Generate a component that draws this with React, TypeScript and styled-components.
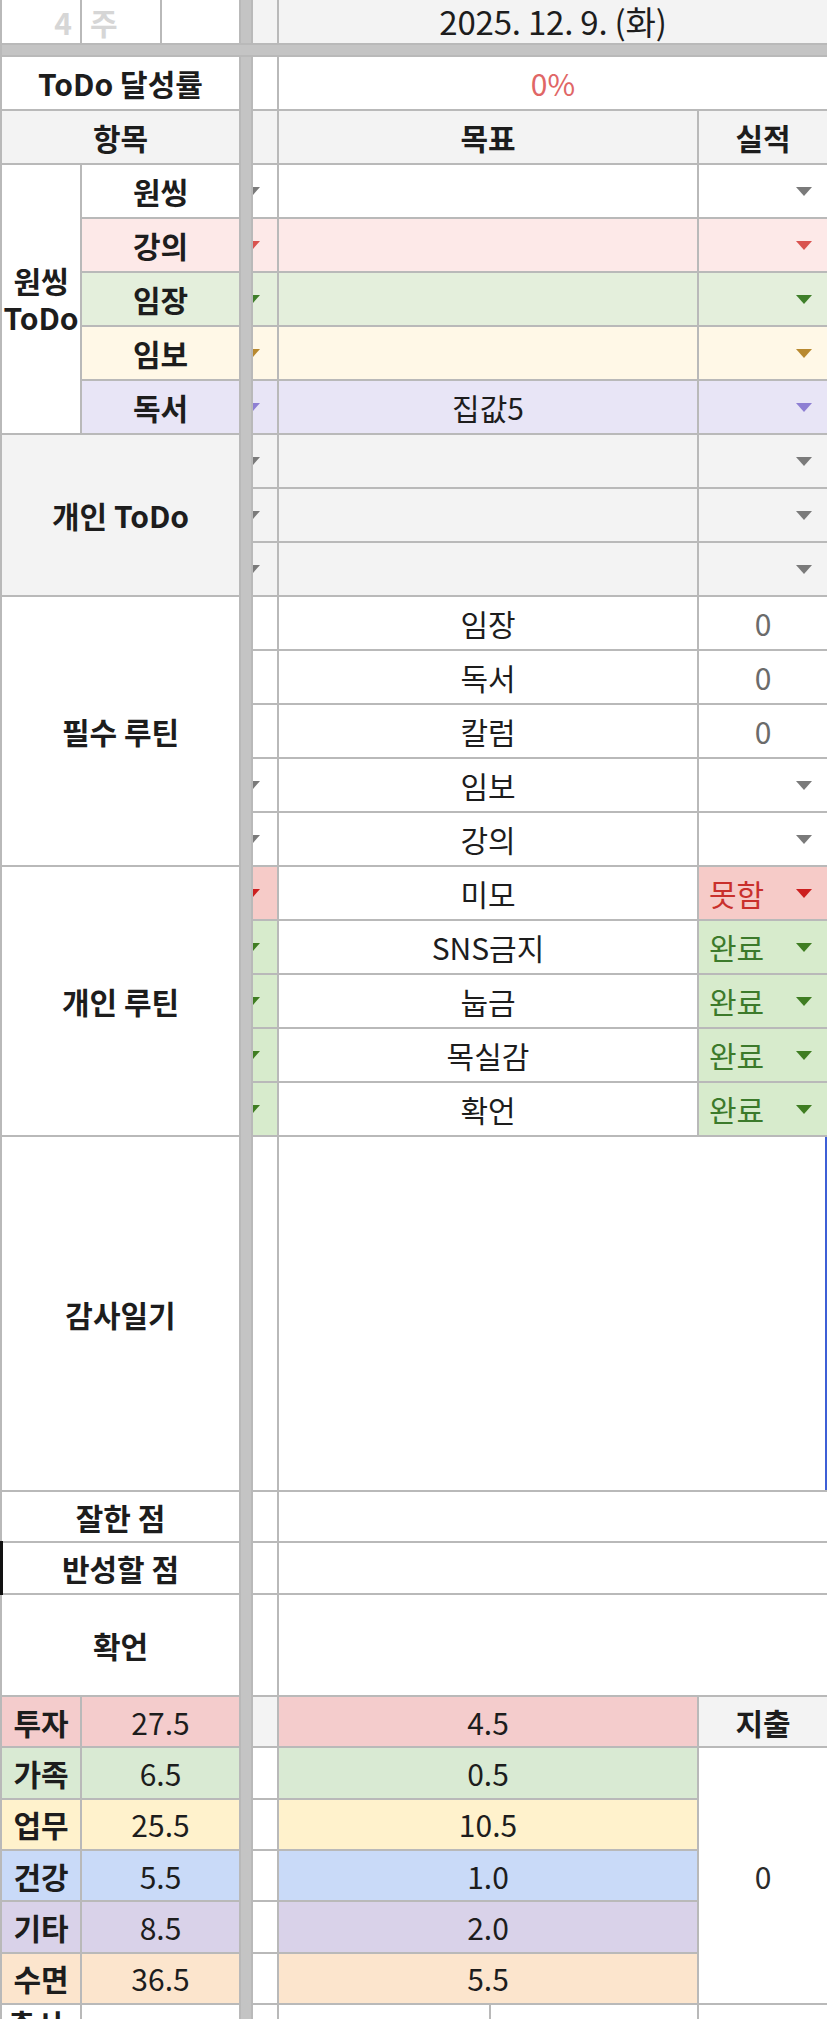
import React from 'react';
import styled, { createGlobalStyle } from 'styled-components';

const LINE = '#b9b9b9';
const BAND = '#c4c4c4';
const GRAY = '#f3f3f3';

const GlobalStyle = createGlobalStyle`
  html, body { margin: 0; padding: 0; background: #fff; overflow: hidden; }
  body { font-family: "Noto Sans CJK KR", "Noto Sans", sans-serif; }
`;

const Sheet = styled.div`
  display: grid;
  grid-template-columns: 78px 78px 77px 10px 24px 418px 128px;
  grid-template-rows: 43px 10px repeat(20, 52px) 353px repeat(10, 49.3px) 40px;
  gap: 2px;
  padding-left: 2px;
  background: ${LINE};
  width: 827px;
  height: 2019px;
  overflow: hidden;
  box-sizing: border-box;
  font-family: "Noto Sans CJK KR", sans-serif;
  font-size: 30px;
  color: #1d1d1d;
`;

const VBand = styled.div<{ $row: string }>`
  grid-column: 4;
  grid-row: ${(p) => p.$row};
  background: ${BAND};
`;

const HBand = styled.div`
  grid-column: 1 / -1;
  grid-row: 2;
  background: ${BAND};
`;

type CellProps = {
  $bg?: string;
  $cs?: number;
  $rs?: number;
  $justify?: 'flex-start' | 'center' | 'flex-end' | 'space-between';
  $color?: string;
};

const Cell = styled.div<CellProps>`
  grid-column: span ${(p) => p.$cs ?? 1};
  grid-row: span ${(p) => p.$rs ?? 1};
  background: ${(p) => p.$bg ?? '#fff'};
  color: ${(p) => p.$color ?? 'inherit'};
  display: flex;
  align-items: center;
  justify-content: ${(p) => p.$justify ?? 'center'};
  overflow: hidden;
  min-width: 0;
  white-space: nowrap;
  line-height: 1.2;
  position: relative;
`;

const Label = styled(Cell)`
  font-weight: 700;
`;

const GroupLabel = styled(Label)`
  flex-direction: column;
  line-height: 1.22;
  text-align: center;
  overflow: visible;
`;

const GroupLine = styled.span`
  display: block;
`;

const WeekText = styled(Cell)`
  font-weight: 700;
  color: #d6d6d6;
  padding: 0 8px;
`;

const DateCell = styled(Cell)`
  font-size: 33px;
  line-height: 1.1;
  letter-spacing: -0.2px;
  overflow: visible;
`;

const Value = styled(Cell)`
  font-weight: 400;
`;

const Dropdown = styled(Cell)`
  padding: 0 15px 0 10px;
`;

const SelectedNote = styled(Cell)`
  box-shadow: inset -2px 0 0 #3d5fd6;
`;

const MarkedLabel = styled(Label)`
  overflow: visible;
  &::before {
    content: '';
    position: absolute;
    left: -2px;
    top: -2px;
    bottom: -2px;
    width: 3px;
    background: #111;
  }
`;

const Arrow = styled.span<{ $color: string }>`
  flex: none;
  width: 0;
  height: 0;
  border-left: 8px solid transparent;
  border-right: 8px solid transparent;
  border-top: 9px solid ${(p) => p.$color};
`;

const ClippedArrow = styled(Arrow)`
  margin-left: -9px;
  align-self: center;
`;

const StatusText = styled.span<{ $color: string }>`
  color: ${(p) => p.$color};
  font-size: 30px;
`;

const SplitCell = styled(Cell)`
  display: grid;
  grid-template-columns: 210px 1fr;
  gap: 2px;
  background: ${LINE};
  align-items: stretch;
`;

const SplitPart = styled.div`
  background: #fff;
`;

const TailLabel = styled(Cell)`
  align-items: flex-start;
  justify-content: flex-start;
  padding-left: 6px;
  font-weight: 700;
`;

const oneThing = [
  { label: '원씽', bg: '#ffffff', arrow: '#7a7a7a', goal: '' },
  { label: '강의', bg: '#fde9e8', arrow: '#d9534f', goal: '' },
  { label: '임장', bg: '#e4efdc', arrow: '#3f7f2a', goal: '' },
  { label: '임보', bg: '#fff8e7', arrow: '#b8892f', goal: '' },
  { label: '독서', bg: '#e8e5f6', arrow: '#8e7fd3', goal: '집값5' },
];

const mustRoutines = [
  { goal: '임장', result: '0' },
  { goal: '독서', result: '0' },
  { goal: '칼럼', result: '0' },
  { goal: '임보', result: null },
  { goal: '강의', result: null },
];

const DONE = { bg: '#d7ebcc', text: '#3c7a2b', arrow: '#3f7d22', label: '완료' };
const FAIL = { bg: '#f6cbc8', text: '#c9302c', arrow: '#cc1f1f', label: '못함' };

const myRoutines = [
  { goal: '미모', status: FAIL },
  { goal: 'SNS금지', status: DONE },
  { goal: '눕금', status: DONE },
  { goal: '목실감', status: DONE },
  { goal: '확언', status: DONE },
];

const stats = [
  { label: '투자', total: '27.5', today: '4.5', bg: '#f4cccc' },
  { label: '가족', total: '6.5', today: '0.5', bg: '#d9ead3' },
  { label: '업무', total: '25.5', today: '10.5', bg: '#fff2cc' },
  { label: '건강', total: '5.5', today: '1.0', bg: '#c9daf8' },
  { label: '기타', total: '8.5', today: '2.0', bg: '#d9d2e9' },
  { label: '수면', total: '36.5', today: '5.5', bg: '#fce5cd' },
];

const GREY_ARROW = '#7a7a7a';

export default function App() {
  return (
    <>
      <GlobalStyle />
      <Sheet>
        <VBand $row="1" />
        <HBand />
        <VBand $row="3 / -1" />

        {/* header */}
        <WeekText $justify="flex-end">4</WeekText>
        <WeekText $justify="flex-start">주</WeekText>
        <Cell />
        <Cell $bg={GRAY} />
        <DateCell $cs={2} $bg={GRAY}>2025. 12. 9. (화)</DateCell>

        {/* ToDo rate */}
        <Label $cs={3}>ToDo 달성률</Label>
        <Cell />
        <Value $cs={2} $color="#e06666">0%</Value>

        {/* column header */}
        <Label $cs={3} $bg={GRAY}>항목</Label>
        <Cell $bg={GRAY} />
        <Label $bg={GRAY}>목표</Label>
        <Label $bg={GRAY}>실적</Label>

        {/* one thing todo */}
        {oneThing.map((r, i) => (
          <React.Fragment key={r.label}>
            {i === 0 && (
              <GroupLabel $rs={5}>
                <GroupLine>원씽</GroupLine>
                <GroupLine>ToDo</GroupLine>
              </GroupLabel>
            )}
            <Label $cs={2} $bg={r.bg}>{r.label}</Label>
            <Cell $bg={r.bg} $justify="flex-start">
              <ClippedArrow $color={r.arrow} />
            </Cell>
            <Value $bg={r.bg}>{r.goal}</Value>
            <Dropdown $bg={r.bg} $justify="flex-end">
              <Arrow $color={r.arrow} />
            </Dropdown>
          </React.Fragment>
        ))}

        {/* personal todo */}
        {[0, 1, 2].map((i) => (
          <React.Fragment key={`p${i}`}>
            {i === 0 && (
              <Label $cs={3} $rs={3} $bg={GRAY}>개인 ToDo</Label>
            )}
            <Cell $bg={GRAY} $justify="flex-start">
              <ClippedArrow $color={GREY_ARROW} />
            </Cell>
            <Cell $bg={GRAY} />
            <Dropdown $bg={GRAY} $justify="flex-end">
              <Arrow $color={GREY_ARROW} />
            </Dropdown>
          </React.Fragment>
        ))}

        {/* must routines */}
        {mustRoutines.map((r, i) => (
          <React.Fragment key={`m${i}`}>
            {i === 0 && <Label $cs={3} $rs={5}>필수 루틴</Label>}
            <Cell $justify="flex-start">
              {r.result === null && <ClippedArrow $color={GREY_ARROW} />}
            </Cell>
            <Value>{r.goal}</Value>
            {r.result === null ? (
              <Dropdown $justify="flex-end">
                <Arrow $color={GREY_ARROW} />
              </Dropdown>
            ) : (
              <Value $color="#6b6b6b">{r.result}</Value>
            )}
          </React.Fragment>
        ))}

        {/* personal routines */}
        {myRoutines.map((r, i) => (
          <React.Fragment key={`r${i}`}>
            {i === 0 && <Label $cs={3} $rs={5}>개인 루틴</Label>}
            <Cell $bg={r.status.bg} $justify="flex-start">
              <ClippedArrow $color={r.status.arrow} />
            </Cell>
            <Value>{r.goal}</Value>
            <Dropdown $bg={r.status.bg} $justify="space-between">
              <StatusText $color={r.status.text}>{r.status.label}</StatusText>
              <Arrow $color={r.status.arrow} />
            </Dropdown>
          </React.Fragment>
        ))}

        {/* gratitude journal */}
        <Label $cs={3}>감사일기</Label>
        <Cell />
        <SelectedNote $cs={2} />

        <Label $cs={3}>잘한 점</Label>
        <Cell />
        <Cell $cs={2} />

        <MarkedLabel $cs={3}>반성할 점</MarkedLabel>
        <Cell />
        <Cell $cs={2} />

        <Label $cs={3} $rs={2}>확언</Label>
        <Cell $rs={2} />
        <Cell $cs={2} $rs={2} />

        {/* time stats */}
        {stats.map((s, i) => (
          <React.Fragment key={s.label}>
            <Label $bg={s.bg}>{s.label}</Label>
            <Value $cs={2} $bg={s.bg}>{s.total}</Value>
            <Cell $bg={i === 0 ? GRAY : '#fff'} />
            <Value $bg={s.bg}>{s.today}</Value>
            {i === 0 && <Label $bg={GRAY}>지출</Label>}
            {i === 1 && <Value $rs={5} $color="#2b2b2b">0</Value>}
          </React.Fragment>
        ))}

        {/* partial last row */}
        <TailLabel>총시</TailLabel>
        <Cell $cs={2} />
        <Cell />
        <SplitCell>
          <SplitPart />
          <SplitPart />
        </SplitCell>
        <Cell />
      </Sheet>
    </>
  );
}
